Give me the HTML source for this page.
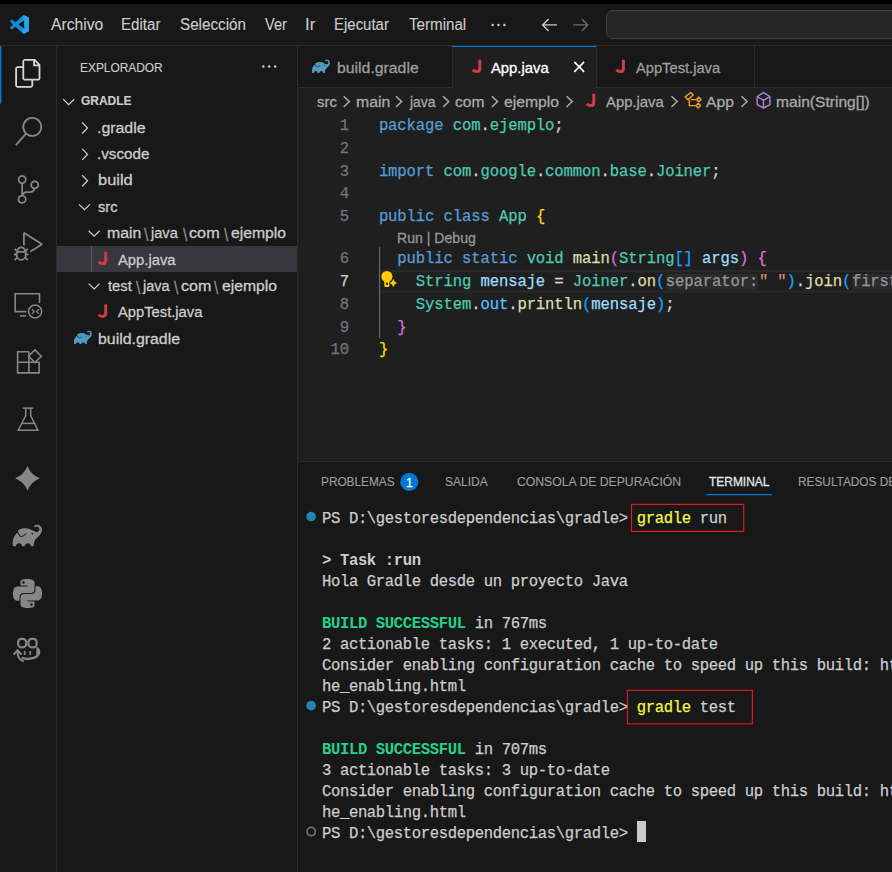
<!DOCTYPE html>
<html lang="es"><head><meta charset="utf-8"><title>App.java - gradle - Visual Studio Code</title>
<style>

html,body{margin:0;padding:0}
body{width:892px;height:872px;overflow:hidden;background:#181818;position:relative;font-family:"Liberation Sans", sans-serif;color:#cccccc}
#chrome{position:absolute;left:0;top:0;width:892px;height:872px;overflow:hidden}
.a{position:absolute}
.t{position:absolute;white-space:pre;line-height:1;transform-origin:0 0;-webkit-text-stroke:0.3px currentColor}
.s{font-family:"Liberation Sans", sans-serif}
.m{font-family:"Liberation Mono", monospace}
.cl,.tl,.ln{-webkit-text-stroke:0.25px currentColor;position:absolute;white-space:pre;font-family:"Liberation Mono", monospace;font-size:15.6px;line-height:22.8px;height:22.8px}
.cl{left:378.9px;letter-spacing:-0.1249px;color:#d4d4d4}
.ln{left:300px;width:48.9px;text-align:right;letter-spacing:-0.1249px;color:#6e7681}
.tl{left:321.9px;letter-spacing:-0.3615px;color:#cccccc;line-height:21px;height:21px}
.k{color:#569cd6}.ty{color:#4ec9b0}.f{color:#dcdcaa}.v{color:#9cdcfe}.c{color:#4fc1ff}.st{color:#ce9178}
.b1{color:#ffd700}.b2{color:#da70d6}.b3{color:#179fff}
.ih{display:inline-block;background:#2b2b2b;color:#969696;border-radius:3px;height:16.5px;line-height:16.5px;vertical-align:baseline;padding:0 0.2px;margin:0 0.5px;letter-spacing:-0.1249px}
.y{color:#f5f543}.g{color:#23d18b;font-weight:700;-webkit-text-stroke:0}.bd{font-weight:700;-webkit-text-stroke:0}
svg{position:absolute;overflow:visible}

</style></head>
<body>

<div id="chrome">
<div class="a" style="left:0;top:0;width:892px;height:4px;background:#000"></div>
<div class="a" style="left:0;top:45px;width:892px;height:1px;background:#2b2b2b"></div>
<div class="a" style="left:606px;top:10px;width:300px;height:27px;border:1px solid #404040;border-radius:7px;background:#262626"></div>
<svg style="left:9.7px;top:14.9px" width="18.9" height="18.9" viewBox="0 0 24 24"><linearGradient id="vg" x1="0" x2="1" y1="0" y2="0"><stop offset="0" stop-color="#0c84d2"/><stop offset="0.68" stop-color="#1090de"/><stop offset="0.72" stop-color="#24a4f0"/><stop offset="1" stop-color="#2aaaf4"/></linearGradient><path fill="url(#vg)" d="M23.15 2.587L18.21.21a1.494 1.494 0 0 0-1.705.29l-9.46 8.63-4.12-3.128a.999.999 0 0 0-1.276.057L.327 7.261A1 1 0 0 0 .326 8.74L3.899 12 .326 15.26a1 1 0 0 0 .001 1.479L1.65 17.94a.999.999 0 0 0 1.276.057l4.12-3.128 9.46 8.63a1.492 1.492 0 0 0 1.704.29l4.942-2.377A1.5 1.5 0 0 0 24 20.06V3.939a1.5 1.5 0 0 0-.85-1.352zm-5.146 14.861L10.826 12l7.178-5.448v10.896z"/></svg>
<div class="a" style="left:56px;top:46px;width:1px;height:826px;background:#2b2b2b"></div>
<div class="a" style="left:297px;top:46px;width:1px;height:826px;background:#2b2b2b"></div>
<div class="a" style="left:57px;top:246px;width:240px;height:26px;background:#37373d"></div>
<div class="a" style="left:91px;top:246px;width:1px;height:26px;background:#5a5a5a"></div>
<div class="a" style="left:298px;top:88px;width:594px;height:373px;background:#1f1f1f"></div>
<div class="a" style="left:298px;top:87px;width:594px;height:1px;background:#2b2b2b"></div>
<div class="a" style="left:452px;top:46px;width:1px;height:42px;background:#2b2b2b"></div>
<div class="a" style="left:453px;top:46px;width:143px;height:42px;background:#1f1f1f"></div>
<div class="a" style="left:452px;top:46px;width:144px;height:1.4px;background:#0078d4"></div>
<div class="a" style="left:596px;top:46px;width:1px;height:42px;background:#2b2b2b"></div>
<div class="a" style="left:754px;top:46px;width:1px;height:42px;background:#2b2b2b"></div>
<div class="a" style="left:298px;top:461px;width:594px;height:1px;background:#2b2b2b"></div>
<svg style="left:14.2px;top:59.0px" width="28.8" height="28.8" viewBox="0 0 24 24"><path fill="#d7d7d7" d="M17.5 0h-9L7 1.5V6H2.5L1 7.5v15.07L2.5 24h12.07L16 22.57V18h4.7l1.3-1.43V4.5L17.5 0zm0 2.12l2.38 2.38H17.5V2.12zm-3 20.38h-12v-15H7v9.07L8.5 18h6v4.5zm6-6h-12v-15H16V6h4.5v10.5z"/></svg>
<svg style="left:14.2px;top:116.6px" width="28.8" height="28.8" viewBox="0 0 24 24"><path fill="#868686" d="M15.25 0a8.25 8.25 0 0 0-6.18 13.72L1 22.88l1.12 1 8.05-9.12A8.251 8.251 0 1 0 15.25.01V0zm0 15a6.75 6.75 0 1 1 0-13.5 6.75 6.75 0 0 1 0 13.5z"/></svg>
<svg style="left:14.2px;top:175.1px" width="28.8" height="28.8" viewBox="0 0 24 24"><path fill="#868686" d="M21.007 8.222A3.738 3.738 0 0 0 15.045 5.2a3.737 3.737 0 0 0 1.156 6.583 2.988 2.988 0 0 1-2.668 1.67h-2.99a4.456 4.456 0 0 0-2.989 1.165V7.4a3.737 3.737 0 1 0-1.494 0v9.117a3.776 3.776 0 1 0 1.816.099 2.99 2.99 0 0 1 2.668-1.667h2.99a4.484 4.484 0 0 0 4.223-3.039 3.736 3.736 0 0 0 3.25-3.687zM4.565 3.738a2.242 2.242 0 1 1 4.484 0 2.242 2.242 0 0 1-4.484 0zm4.484 16.441a2.242 2.242 0 1 1-4.484 0 2.242 2.242 0 0 1 4.484 0zm8.221-9.715a2.242 2.242 0 1 1 0-4.485 2.242 2.242 0 0 1 0 4.485z"/></svg>
<svg style="left:14.2px;top:232.2px" width="28.8" height="28.8" viewBox="0 0 24 24"><path fill="#868686" d="M10.94 13.5l-1.32 1.32a3.73 3.73 0 0 0-7.24 0L1.06 13.5 0 14.56l1.72 1.72-.22.22V18H0v1.5h1.5v.08c.077.489.214.966.41 1.42L0 22.94 1.06 24l1.65-1.65A4.308 4.308 0 0 0 6 24a4.31 4.31 0 0 0 3.29-1.65L10.94 24 12 22.94 10.09 21c.198-.464.336-.951.41-1.45v-.1H12V18h-1.5v-1.5l-.22-.22L12 14.56l-1.06-1.06zM6 13.5a2.25 2.25 0 0 1 2.25 2.25h-4.5A2.25 2.25 0 0 1 6 13.5zm3 6a3.33 3.33 0 0 1-3 3 3.33 3.33 0 0 1-3-3v-2.25h6v2.25zm14.76-9.9v1.26L13.5 17.37V15.6l8.5-5.37L9 2v9.46a5.07 5.07 0 0 0-1.5-.72V.63L8.64 0l15.12 9.6z"/></svg>
<svg style="left:0;top:0" width="892" height="872" viewBox="0 0 892 872">
<g fill="none" stroke="#868686" stroke-width="1.6"><path d="M26.4 311.6H15.2V293.7H39.5V303.0"/><path d="M20 315.9H26.2"/><circle cx="35.1" cy="311.5" r="6.5" stroke-width="1.5"/><path d="M31.9 309.3L34.2 311.6L31.9 313.9M38.9 309.3L36.6 311.6L38.9 313.9" stroke-width="1.3"/></g>
<g fill="none" stroke="#868686" stroke-width="1.6"><path d="M28.9 351.8H17.6V372.9H39.1V362.3H17.6M28.9 351.8V372.9"/><path d="M34.9 349.9L41.2 356.2L34.9 362.5L28.6 356.2Z"/></g>
<g fill="none" stroke="#868686" stroke-width="1.5"><path d="M22.7 408.1H33.3"/><path d="M25.7 408.1V415.6L18.3 430.2H37.9L30.7 415.6V408.1"/><path d="M21.8 423.4H34.4"/></g>
<path fill="#868686" d="M27.5 465.90000000000003Q31.0 474.8 39.9 478.3Q31.0 481.8 27.5 490.7Q24.0 481.8 15.1 478.3Q24.0 474.8 27.5 465.90000000000003Z"/>
<path transform="translate(12.70 520.81) scale(1.2208)" fill="#868686" d="M22.695 4.297a3.807 3.807 0 0 0-5.29-.09.368.368 0 0 0 0 .533l.46.47a.363.363 0 0 0 .474.032 2.182 2.182 0 0 1 2.86 3.291c-3.023 3.02-7.056-5.447-16.211-1.083a1.24 1.24 0 0 0-.534 1.745l1.571 2.713a1.238 1.238 0 0 0 1.681.461l.037-.02-.029.02.688-.384a16.083 16.083 0 0 0 2.193-1.635.384.384 0 0 1 .499-.016.357.357 0 0 1 .016.534 16.435 16.435 0 0 1-2.316 1.741H8.77l-.696.39a1.958 1.958 0 0 1-.963.25 1.987 1.987 0 0 1-1.726-.989L3.9 9.696C1.06 11.72-.686 15.603.26 20.522a.363.363 0 0 0 .354.296h1.675a.363.363 0 0 0 .37-.331 2.478 2.478 0 0 1 4.915 0 .36.36 0 0 0 .357.317h1.638a.363.363 0 0 0 .357-.317 2.478 2.478 0 0 1 4.914 0 .363.363 0 0 0 .358.317h1.627a.363.363 0 0 0 .363-.357c.037-2.294.656-4.93 2.42-6.25 6.108-4.57 4.502-8.486 3.088-9.9zm-6.229 6.901l-1.165-.584a.73.73 0 1 1 1.165.587z"/>
<path transform="translate(13 579) scale(1.2083)" fill="#868686" d="M14.25.18l.9.2.73.26.59.3.45.32.34.34.25.34.16.33.1.3.04.26.02.2-.01.13V8.5l-.05.63-.13.55-.21.46-.26.38-.3.31-.33.25-.35.19-.35.14-.33.1-.3.07-.26.04-.21.02H8.77l-.69.05-.59.14-.5.22-.41.27-.33.32-.27.35-.2.36-.15.37-.1.35-.07.32-.04.27-.02.21v3.06H3.17l-.21-.03-.28-.07-.32-.12-.35-.18-.36-.26-.36-.36-.35-.46-.32-.59-.28-.73-.21-.88-.14-1.05-.05-1.23.06-1.22.16-1.04.24-.87.32-.71.36-.57.4-.44.42-.33.42-.24.4-.16.36-.1.32-.05.24-.01h.16l.06.01h8.16v-.83H6.18l-.01-2.75-.02-.37.05-.34.11-.31.17-.28.25-.26.31-.23.38-.2.44-.18.51-.15.58-.12.64-.1.71-.06.77-.04.84-.02 1.27.05zm-6.3 1.98l-.23.33-.08.41.08.41.23.34.33.22.41.09.41-.09.33-.22.23-.34.08-.41-.08-.41-.23-.33-.33-.22-.41-.09-.41.09zm13.09 3.95l.28.06.32.12.35.18.36.27.36.35.35.47.32.59.28.73.21.88.14 1.04.05 1.23-.06 1.23-.16 1.04-.24.86-.32.71-.36.57-.4.45-.42.33-.42.24-.4.16-.36.09-.32.05-.24.02-.16-.01h-8.22v.82h5.84l.01 2.76.02.36-.05.34-.11.31-.17.29-.25.25-.31.24-.38.2-.44.17-.51.15-.58.13-.64.09-.71.07-.77.04-.84.01-1.27-.04-1.07-.14-.9-.2-.73-.25-.59-.3-.45-.33-.34-.34-.25-.34-.16-.33-.1-.3-.04-.25-.02-.2.01-.13v-5.34l.05-.64.13-.54.21-.46.26-.38.3-.32.33-.24.35-.2.35-.14.33-.1.3-.06.26-.04.21-.02.13-.01h5.84l.69-.05.59-.14.5-.21.41-.28.33-.32.27-.35.2-.36.15-.36.1-.35.07-.32.04-.28.02-.21V6.07h2.09l.14.01zm-6.47 14.25l-.23.33-.08.41.08.41.23.33.33.23.41.08.41-.08.33-.23.23-.33.08-.41-.08-.41-.23-.33-.33-.23-.41-.08-.41.08z"/>
<g fill="none" stroke="#868686" stroke-width="2.2"><rect x="18.1" y="638.9" width="8.1" height="8.4" rx="3.4"/><rect x="28.4" y="638.9" width="8.3" height="8.4" rx="3.4"/><path d="M21.6 657.6C27 659.7 33 658.9 37.6 656.2" stroke-width="2.5"/><path d="M24.8 650.9V654.9M30.2 650.9V654.9" stroke-width="1.9" stroke="#7c7c7c"/><path d="M17.6 650.4C17.3 656 19 660.4 23.8 661.3M13.7 654.5L17.6 650.2L21.5 654.5" stroke-width="2"/></g><path d="M36.4 646.6C41.6 648.4 41.6 655.6 36.4 657.6Z" fill="#868686"/>
<circle cx="492.6" cy="24.9" r="1.25" fill="#ccc"/><circle cx="498.5" cy="24.9" r="1.25" fill="#ccc"/><circle cx="504.4" cy="24.9" r="1.25" fill="#ccc"/>
<path d="M557 24.9H543M548.6 18.9L542.6 24.9L548.6 30.9" fill="none" stroke="#cccccc" stroke-width="1.4"/>
<path d="M573.2 24.9H587.4M581.8 18.9L587.8 24.9L581.8 30.9" fill="none" stroke="#6c6c6c" stroke-width="1.4"/>
<rect x="0" y="46" width="1.4" height="57.6" fill="#0078d4"/>
<circle cx="263.3" cy="66.5" r="1.25" fill="#ccc"/><circle cx="269.2" cy="66.5" r="1.25" fill="#ccc"/><circle cx="275.1" cy="66.5" r="1.25" fill="#ccc"/>
<path d="M63.20 99.30L68.70 104.60L74.20 99.30" fill="none" stroke="#cccccc" stroke-width="1.3"/>
<path d="M82.20 122.50L87.50 128.00L82.20 133.50" fill="none" stroke="#cccccc" stroke-width="1.3"/>
<path d="M82.20 148.90L87.50 154.40L82.20 159.90" fill="none" stroke="#cccccc" stroke-width="1.3"/>
<path d="M82.20 175.30L87.50 180.80L82.20 186.30" fill="none" stroke="#cccccc" stroke-width="1.3"/>
<path d="M78.95 204.40L84.45 209.70L89.95 204.40" fill="none" stroke="#cccccc" stroke-width="1.3"/>
<path d="M88.65 230.80L94.15 236.10L99.65 230.80" fill="none" stroke="#cccccc" stroke-width="1.3"/>
<path d="M88.65 283.60L94.15 288.90L99.65 283.60" fill="none" stroke="#cccccc" stroke-width="1.3"/>
<path transform="translate(97.80 251.80) scale(1.000)" d="M7.9 0V8.6C7.9 10.9 6.6 11.8 4.6 11.8C3.1 11.8 1.9 11.2 0.9 10.0" fill="none" stroke="#cc3e44" stroke-width="3"/>
<path transform="translate(97.80 304.60) scale(1.000)" d="M7.9 0V8.6C7.9 10.9 6.6 11.8 4.6 11.8C3.1 11.8 1.9 11.2 0.9 10.0" fill="none" stroke="#cc3e44" stroke-width="3"/>
<path transform="translate(73.90 328.40) scale(0.7500)" fill="#4f9cc3" d="M22.695 4.297a3.807 3.807 0 0 0-5.29-.09.368.368 0 0 0 0 .533l.46.47a.363.363 0 0 0 .474.032 2.182 2.182 0 0 1 2.86 3.291c-3.023 3.02-7.056-5.447-16.211-1.083a1.24 1.24 0 0 0-.534 1.745l1.571 2.713a1.238 1.238 0 0 0 1.681.461l.037-.02-.029.02.688-.384a16.083 16.083 0 0 0 2.193-1.635.384.384 0 0 1 .499-.016.357.357 0 0 1 .016.534 16.435 16.435 0 0 1-2.316 1.741H8.77l-.696.39a1.958 1.958 0 0 1-.963.25 1.987 1.987 0 0 1-1.726-.989L3.9 9.696C1.06 11.72-.686 15.603.26 20.522a.363.363 0 0 0 .354.296h1.675a.363.363 0 0 0 .37-.331 2.478 2.478 0 0 1 4.915 0 .36.36 0 0 0 .357.317h1.638a.363.363 0 0 0 .357-.317 2.478 2.478 0 0 1 4.914 0 .363.363 0 0 0 .358.317h1.627a.363.363 0 0 0 .363-.357c.037-2.294.656-4.93 2.42-6.25 6.108-4.57 4.502-8.486 3.088-9.9zm-6.229 6.901l-1.165-.584a.73.73 0 1 1 1.165.587z"/>
<path transform="translate(312.00 57.30) scale(0.7500)" fill="#4f9cc3" d="M22.695 4.297a3.807 3.807 0 0 0-5.29-.09.368.368 0 0 0 0 .533l.46.47a.363.363 0 0 0 .474.032 2.182 2.182 0 0 1 2.86 3.291c-3.023 3.02-7.056-5.447-16.211-1.083a1.24 1.24 0 0 0-.534 1.745l1.571 2.713a1.238 1.238 0 0 0 1.681.461l.037-.02-.029.02.688-.384a16.083 16.083 0 0 0 2.193-1.635.384.384 0 0 1 .499-.016.357.357 0 0 1 .016.534 16.435 16.435 0 0 1-2.316 1.741H8.77l-.696.39a1.958 1.958 0 0 1-.963.25 1.987 1.987 0 0 1-1.726-.989L3.9 9.696C1.06 11.72-.686 15.603.26 20.522a.363.363 0 0 0 .354.296h1.675a.363.363 0 0 0 .37-.331 2.478 2.478 0 0 1 4.915 0 .36.36 0 0 0 .357.317h1.638a.363.363 0 0 0 .357-.317 2.478 2.478 0 0 1 4.914 0 .363.363 0 0 0 .358.317h1.627a.363.363 0 0 0 .363-.357c.037-2.294.656-4.93 2.42-6.25 6.108-4.57 4.502-8.486 3.088-9.9zm-6.229 6.901l-1.165-.584a.73.73 0 1 1 1.165.587z"/>
<path transform="translate(471.90 59.80) scale(1.000)" d="M7.9 0V8.6C7.9 10.9 6.6 11.8 4.6 11.8C3.1 11.8 1.9 11.2 0.9 10.0" fill="none" stroke="#cc3e44" stroke-width="3"/>
<path transform="translate(615.50 59.80) scale(1.000)" d="M7.9 0V8.6C7.9 10.9 6.6 11.8 4.6 11.8C3.1 11.8 1.9 11.2 0.9 10.0" fill="none" stroke="#cc3e44" stroke-width="3"/>
<path d="M574.3 61.9L584.1 71.9M584.1 61.9L574.3 71.9" fill="none" stroke="#ffffff" stroke-width="1.6"/>
<path d="M343.65 96.20L349.35 101.60L343.65 107.00" fill="none" stroke="#a9a9a9" stroke-width="1.5"/>
<path d="M395.95 96.20L401.65 101.60L395.95 107.00" fill="none" stroke="#a9a9a9" stroke-width="1.5"/>
<path d="M443.05 96.20L448.75 101.60L443.05 107.00" fill="none" stroke="#a9a9a9" stroke-width="1.5"/>
<path d="M491.85 96.20L497.55 101.60L491.85 107.00" fill="none" stroke="#a9a9a9" stroke-width="1.5"/>
<path d="M566.55 96.20L572.25 101.60L566.55 107.00" fill="none" stroke="#a9a9a9" stroke-width="1.5"/>
<path d="M671.45 96.20L677.15 101.60L671.45 107.00" fill="none" stroke="#a9a9a9" stroke-width="1.5"/>
<path d="M741.45 96.20L747.15 101.60L741.45 107.00" fill="none" stroke="#a9a9a9" stroke-width="1.5"/>
<path transform="translate(585.90 93.80) scale(1.000)" d="M7.9 0V8.6C7.9 10.9 6.6 11.8 4.6 11.8C3.1 11.8 1.9 11.2 0.9 10.0" fill="none" stroke="#cc3e44" stroke-width="3"/>
<g fill="none" stroke="#ee9d28" stroke-width="1.45" stroke-linejoin="round"><path d="M685.3 96.9L690.7 92.5L693.2 95.0L687.9 99.7Z"/><path d="M696.5 99.5L698.8 97.2L701.1 99.5L698.8 101.8Z"/><path d="M695.9 105.6L698.2 103.3L700.5 105.6L698.2 107.9Z"/><path d="M690.6 99.6H696.3M689.3 99.9V105.6H695.8"/></g>
<g fill="none" stroke="#b180d7" stroke-width="1.45" stroke-linejoin="round"><path d="M763.5 92.7L769.9 96.5V104.6L763.5 108.0L757.2 104.6V96.5Z"/><path d="M757.2 96.5L763.5 100.3L769.9 96.5M763.5 100.3V108.0"/></g>
<path d="M379.6 246.8V337.8" stroke="#6e6e6e" stroke-width="1.1"/>
<rect x="380.2" y="270.0" width="512" height="2.3" fill="#292929"/><rect x="380.2" y="290.5" width="512" height="2.3" fill="#292929"/>
<g><circle cx="386.9" cy="276.5" r="5.55" fill="#ffcc00"/><path d="M384.3 280.2H389.5V285.6Q389.5 287.0 388.1 287.0H385.7Q384.3 287.0 384.3 285.6Z" fill="#ffcc00"/><rect x="385.9" y="282.7" width="2.1" height="2.0" fill="#1f1f1f"/><path d="M393.3 278.6Q394.0 282.4 397.6 283.1Q394.0 283.8 393.3 287.6Q392.6 283.8 389.0 283.1Q392.6 282.4 393.3 278.6Z" fill="#ffcc00" stroke="#1f1f1f" stroke-width="0.9" paint-order="stroke"/></g>
<circle cx="409.3" cy="481.9" r="9.1" fill="#0078d4"/>
<path d="M706.4 494.6H772" stroke="#0078d4" stroke-width="1.3"/>
<circle cx="311.1" cy="516.6" r="4.85" fill="#2085b2"/>
<circle cx="311.1" cy="705.6" r="4.85" fill="#2085b2"/>
<circle cx="311.2" cy="831.6" r="4.15" fill="none" stroke="#6f6f6f" stroke-width="1.7"/>
<rect x="631.5" y="504.4" width="112.2" height="27" fill="none" stroke="#e21a1f" stroke-width="1.15"/>
<rect x="627.4" y="690.3" width="125" height="33.6" fill="none" stroke="#e21a1f" stroke-width="1.15"/>
<rect x="637" y="821" width="9" height="21" fill="#cacaca"/>
</svg>
<div class="a" style="left:298px;top:112px;width:594px;height:349px;overflow:hidden"><div class="a" style="left:-298px;top:-112px;width:1400px;height:872px">
<div class="ln" style="top:114.65px">1</div><div class="cl" style="top:114.65px"><span class="k">package</span> <span class="ty">com</span>.<span class="ty">ejemplo</span>;</div>
<div class="ln" style="top:137.65px">2</div><div class="cl" style="top:137.65px"></div>
<div class="ln" style="top:160.65px">3</div><div class="cl" style="top:160.65px"><span class="k">import</span> <span class="ty">com</span>.<span class="ty">google</span>.<span class="ty">common</span>.<span class="ty">base</span>.<span class="ty">Joiner</span>;</div>
<div class="ln" style="top:182.65px">4</div><div class="cl" style="top:182.65px"></div>
<div class="ln" style="top:205.65px">5</div><div class="cl" style="top:205.65px"><span class="k">public</span> <span class="k">class</span> <span class="ty">App</span> <span class="b1">{</span></div>
<div class="ln" style="top:247.65px">6</div><div class="cl" style="top:247.65px">  <span class="k">public</span> <span class="k">static</span> <span class="ty">void</span> <span class="f">main</span><span class="b2">(</span><span class="ty">String</span><span class="b3">[]</span> <span class="v">args</span><span class="b2">)</span> <span class="b2">{</span></div>
<div class="ln" style="top:270.65px;color:#cccccc">7</div><div class="cl" style="top:270.65px">    <span class="ty">String</span> <span class="v">mensaje</span> = <span class="ty">Joiner</span>.<span class="f">on</span><span class="b3">(</span><span class="ih">separator:</span><span class="st">" "</span><span class="b3">)</span>.<span class="f">join</span><span class="b3">(</span><span class="ih">first:</span><span class="st">"Hola"</span>, <span class="st">"Gradle"</span><span class="b3">)</span>;</div>
<div class="ln" style="top:293.65px">8</div><div class="cl" style="top:293.65px">    <span class="ty">System</span>.<span class="c">out</span>.<span class="f">println</span><span class="b3">(</span><span class="v">mensaje</span><span class="b3">)</span>;</div>
<div class="ln" style="top:316.65px">9</div><div class="cl" style="top:316.65px">  <span class="b2">}</span></div>
<div class="ln" style="top:338.65px">10</div><div class="cl" style="top:338.65px"><span class="b1">}</span></div>
</div></div>
<div class="a" style="left:298px;top:500px;width:594px;height:372px;overflow:hidden"><div class="a" style="left:-298px;top:-500px;width:1800px;height:872px">
<div class="tl" style="top:508.65px">PS D:\gestoresdependencias\gradle&gt; <span class="y">gradle</span> run</div>
<div class="tl" style="top:550.65px"><span class="bd">&gt; Task :run</span></div>
<div class="tl" style="top:571.65px">Hola Gradle desde un proyecto Java</div>
<div class="tl" style="top:613.65px"><span class="g">BUILD SUCCESSFUL</span> in 767ms</div>
<div class="tl" style="top:634.65px">2 actionable tasks: 1 executed, 1 up-to-date</div>
<div class="tl" style="top:655.65px">Consider enabling configuration cache to speed up this build: ht</div>
<div class="tl" style="top:676.65px">he_enabling.html</div>
<div class="tl" style="top:697.65px">PS D:\gestoresdependencias\gradle&gt; <span class="y">gradle</span> test</div>
<div class="tl" style="top:739.65px"><span class="g">BUILD SUCCESSFUL</span> in 707ms</div>
<div class="tl" style="top:760.65px">3 actionable tasks: 3 up-to-date</div>
<div class="tl" style="top:781.65px">Consider enabling configuration cache to speed up this build: ht</div>
<div class="tl" style="top:802.65px">he_enabling.html</div>
<div class="tl" style="top:823.65px">PS D:\gestoresdependencias\gradle&gt; </div>
</div></div>
</div>
<div class="t s" id="t0" style="left:51.20px;top:17.04px;font-size:15.6px;transform:scaleX(1.0029);color:#cccccc;-webkit-text-stroke-width:0.12px">Archivo</div>
<div class="t s" id="t1" style="left:121.06px;top:17.04px;font-size:15.6px;transform:scaleX(0.9693);color:#cccccc;-webkit-text-stroke-width:0.12px">Editar</div>
<div class="t s" id="t2" style="left:179.96px;top:17.04px;font-size:15.6px;transform:scaleX(0.9761);color:#cccccc;-webkit-text-stroke-width:0.12px">Selección</div>
<div class="t s" id="t3" style="left:264.79px;top:17.04px;font-size:15.6px;transform:scaleX(0.9328);color:#cccccc;-webkit-text-stroke-width:0.12px">Ver</div>
<div class="t s" id="t4" style="left:305.12px;top:17.04px;font-size:15.6px;transform:scaleX(1.0710);color:#cccccc;-webkit-text-stroke-width:0.12px">Ir</div>
<div class="t s" id="t5" style="left:334.36px;top:17.04px;font-size:15.6px;transform:scaleX(0.9597);color:#cccccc;-webkit-text-stroke-width:0.12px">Ejecutar</div>
<div class="t s" id="t6" style="left:409.14px;top:17.04px;font-size:15.6px;transform:scaleX(0.9709);color:#cccccc;-webkit-text-stroke-width:0.12px">Terminal</div>
<div class="t s" id="t7" style="left:80.09px;top:61.04px;font-size:13.3px;transform:scaleX(0.8954);color:#cccccc;-webkit-text-stroke-width:0.15px">EXPLORADOR</div>
<div class="t s" id="t8" style="left:80.60px;top:94.34px;font-size:13.3px;transform:scaleX(0.8994);color:#cccccc;font-weight:700;-webkit-text-stroke-width:0.15px">GRADLE</div>
<div class="t s" id="t9" style="left:97.08px;top:120.33px;font-size:15.2px;transform:scaleX(1.0456);color:#cccccc">.gradle</div>
<div class="t s" id="t10" style="left:97.16px;top:146.33px;font-size:15.2px;transform:scaleX(1.0013);color:#cccccc">.vscode</div>
<div class="t s" id="t11" style="left:98.17px;top:172.33px;font-size:15.2px;transform:scaleX(1.0827);color:#cccccc">build</div>
<div class="t s" id="t12" style="left:97.76px;top:199.33px;font-size:15.2px;transform:scaleX(0.9630);color:#cccccc">src</div>
<div class="t s" id="t13" style="left:107.41px;top:225.33px;font-size:15.2px;transform:scaleX(1.0407);color:#cccccc">main</div>
<div class="t s" id="t14" style="left:151.27px;top:225.33px;font-size:15.2px;transform:scaleX(0.9601);color:#cccccc">java</div>
<div class="t s" id="t15" style="left:189.39px;top:225.33px;font-size:15.2px;transform:scaleX(1.0681);color:#cccccc">com</div>
<div class="t s" id="t16" style="left:230.59px;top:225.33px;font-size:15.2px;transform:scaleX(1.0364);color:#cccccc">ejemplo</div>
<div class="t s" id="t17" style="left:144.15px;top:224.71px;font-size:19px;transform:scaleX(0.8418);color:#8c8c8c">\</div>
<div class="t s" id="t18" style="left:182.69px;top:224.71px;font-size:19px;transform:scaleX(0.8186);color:#8c8c8c">\</div>
<div class="t s" id="t19" style="left:223.75px;top:224.71px;font-size:19px;transform:scaleX(0.8000);color:#8c8c8c">\</div>
<div class="t s" id="t20" style="left:117.64px;top:252.33px;font-size:15.2px;transform:scaleX(0.9728);color:#cccccc">App.java</div>
<div class="t s" id="t21" style="left:108.40px;top:278.33px;font-size:15.2px;transform:scaleX(0.9709);color:#cccccc">test</div>
<div class="t s" id="t22" style="left:143.10px;top:278.33px;font-size:15.2px;transform:scaleX(0.9531);color:#cccccc">java</div>
<div class="t s" id="t23" style="left:181.31px;top:278.33px;font-size:15.2px;transform:scaleX(1.0591);color:#cccccc">com</div>
<div class="t s" id="t24" style="left:221.95px;top:278.33px;font-size:15.2px;transform:scaleX(1.0353);color:#cccccc">ejemplo</div>
<div class="t s" id="t25" style="left:135.69px;top:277.71px;font-size:19px;transform:scaleX(0.8392);color:#8c8c8c">\</div>
<div class="t s" id="t26" style="left:174.00px;top:277.71px;font-size:19px;transform:scaleX(0.8195);color:#8c8c8c">\</div>
<div class="t s" id="t27" style="left:214.28px;top:277.71px;font-size:19px;transform:scaleX(0.8007);color:#8c8c8c">\</div>
<div class="t s" id="t28" style="left:117.64px;top:304.33px;font-size:15.2px;transform:scaleX(0.9699);color:#cccccc">AppTest.java</div>
<div class="t s" id="t29" style="left:98.21px;top:331.33px;font-size:15.2px;transform:scaleX(1.0447);color:#cccccc">build.gradle</div>
<div class="t s" id="t30" style="left:336.68px;top:60.33px;font-size:15.2px;transform:scaleX(1.0402);color:#9d9d9d">build.gradle</div>
<div class="t s" id="t31" style="left:491.10px;top:60.33px;font-size:15.2px;transform:scaleX(0.9748);color:#ffffff">App.java</div>
<div class="t s" id="t32" style="left:635.64px;top:60.33px;font-size:15.2px;transform:scaleX(0.9667);color:#9d9d9d">AppTest.java</div>
<div class="t s" id="t33" style="left:316.83px;top:94.33px;font-size:15.2px;transform:scaleX(0.9821);color:#a9a9a9">src</div>
<div class="t s" id="t34" style="left:355.60px;top:94.33px;font-size:15.2px;transform:scaleX(1.0392);color:#a9a9a9">main</div>
<div class="t s" id="t35" style="left:410.17px;top:94.33px;font-size:15.2px;transform:scaleX(0.9115);color:#a9a9a9">java</div>
<div class="t s" id="t36" style="left:454.95px;top:94.33px;font-size:15.2px;transform:scaleX(1.0273);color:#a9a9a9">com</div>
<div class="t s" id="t37" style="left:503.59px;top:94.33px;font-size:15.2px;transform:scaleX(1.0364);color:#a9a9a9">ejemplo</div>
<div class="t s" id="t38" style="left:605.64px;top:94.33px;font-size:15.2px;transform:scaleX(0.9775);color:#a9a9a9">App.java</div>
<div class="t s" id="t39" style="left:706.24px;top:94.33px;font-size:15.2px;transform:scaleX(1.0344);color:#a9a9a9">App</div>
<div class="t s" id="t40" style="left:776.02px;top:94.33px;font-size:15.2px;transform:scaleX(1.0277);color:#a9a9a9">main(String[])</div>
<div class="t s" id="t41" style="left:396.60px;top:232.02px;font-size:13.8px;transform:scaleX(1.0210);color:#959595">Run | Debug</div>
<div class="t s" id="t42" style="left:320.72px;top:475.04px;font-size:13.3px;transform:scaleX(0.8883);color:#9d9d9d;-webkit-text-stroke-width:0.15px">PROBLEMAS</div>
<div class="t s" id="t43" style="left:406.09px;top:476.77px;font-size:12.2px;;color:#ffffff">1</div>
<div class="t s" id="t44" style="left:444.99px;top:475.04px;font-size:13.3px;transform:scaleX(0.9010);color:#9d9d9d;-webkit-text-stroke-width:0.15px">SALIDA</div>
<div class="t s" id="t45" style="left:516.61px;top:475.04px;font-size:13.3px;transform:scaleX(0.9178);color:#9d9d9d;-webkit-text-stroke-width:0.15px">CONSOLA DE DEPURACIÓN</div>
<div class="t s" id="t46" style="left:709.16px;top:475.04px;font-size:13.3px;transform:scaleX(0.8979);color:#e7e7e7">TERMINAL</div>
<div class="t s" id="t47" style="left:797.60px;top:475.04px;font-size:13.3px;transform:scaleX(0.8900);color:#9d9d9d;-webkit-text-stroke-width:0.15px">RESULTADOS DE LA PRUEBA</div>

</body></html>
